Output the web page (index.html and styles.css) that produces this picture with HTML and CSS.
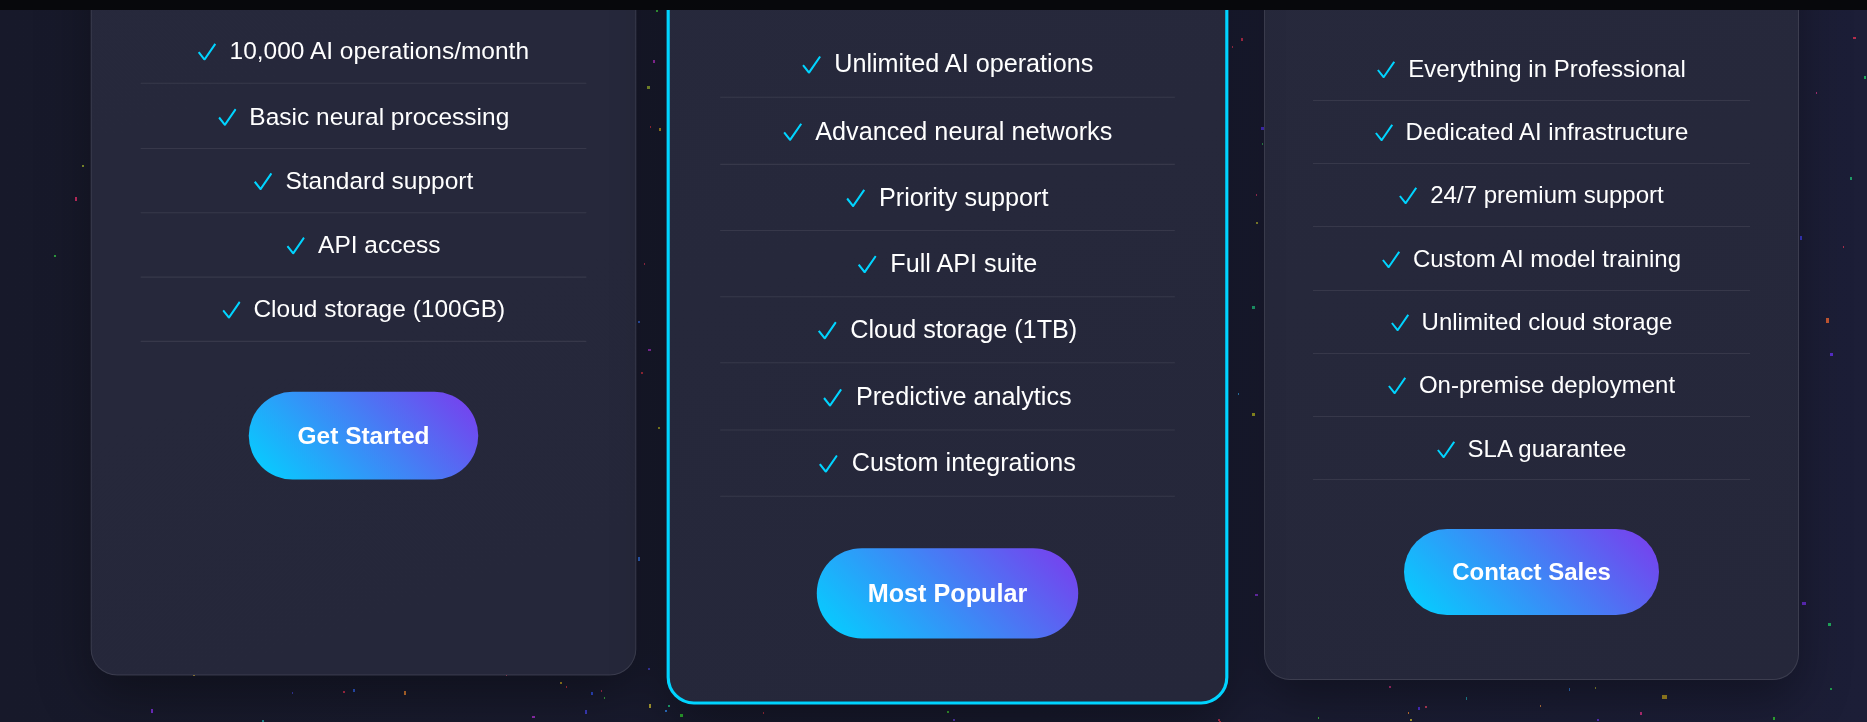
FILE: index.html
```html
<!DOCTYPE html>
<html lang="en">
<head>
<meta charset="utf-8">
<title>Pricing</title>
<link rel="stylesheet" href="styles.css">
</head>
<body>
<div class="topbar"></div>

<div class="particles" aria-hidden="true">
  <span style="left:82px;top:165px;width:2px;height:2px;background:#9aaa30"></span>
  <span style="left:75px;top:197px;width:2px;height:4px;background:#e0306a"></span>
  <span style="left:54px;top:255px;width:2px;height:2px;background:#30b040"></span>
  <span style="left:653px;top:60px;width:2px;height:3px;background:#b030c0"></span>
  <span style="left:647px;top:86px;width:3px;height:3px;background:#9ab030"></span>
  <span style="left:659px;top:128px;width:2px;height:3px;background:#c0a020"></span>
  <span style="left:650px;top:126px;width:1px;height:2px;background:#c03040"></span>
  <span style="left:644px;top:263px;width:1px;height:2px;background:#c03050"></span>
  <span style="left:638px;top:321px;width:2px;height:2px;background:#3060d0"></span>
  <span style="left:648px;top:349px;width:3px;height:2px;background:#a030c0"></span>
  <span style="left:1241px;top:38px;width:2px;height:3px;background:#d03050"></span>
  <span style="left:1232px;top:46px;width:1px;height:2px;background:#c03050"></span>
  <span style="left:1261px;top:127px;width:3px;height:3px;background:#5030e0"></span>
  <span style="left:1262px;top:143px;width:1px;height:2px;background:#30a050"></span>
  <span style="left:1256px;top:194px;width:1px;height:2px;background:#c03060"></span>
  <span style="left:1256px;top:222px;width:2px;height:2px;background:#a0a030"></span>
  <span style="left:1252px;top:306px;width:3px;height:3px;background:#20c080"></span>
  <span style="left:1853px;top:37px;width:3px;height:2px;background:#d03050"></span>
  <span style="left:1864px;top:76px;width:2px;height:3px;background:#20c060"></span>
  <span style="left:1816px;top:92px;width:1px;height:2px;background:#c03080"></span>
  <span style="left:1850px;top:177px;width:2px;height:3px;background:#20b070"></span>
  <span style="left:1800px;top:236px;width:2px;height:4px;background:#4040e0"></span>
  <span style="left:1843px;top:246px;width:1px;height:2px;background:#c03050"></span>
  <span style="left:1826px;top:318px;width:3px;height:5px;background:#e06030"></span>
  <span style="left:1830px;top:353px;width:3px;height:3px;background:#6030e0"></span>
  <span style="left:641px;top:372px;width:2px;height:2px;background:#c03040"></span>
  <span style="left:658px;top:427px;width:2px;height:2px;background:#a0a020"></span>
  <span style="left:638px;top:557px;width:2px;height:4px;background:#3070e0"></span>
  <span style="left:648px;top:668px;width:2px;height:2px;background:#4040c0"></span>
  <span style="left:193px;top:674px;width:2px;height:2px;background:#c0a030"></span>
  <span style="left:506px;top:674px;width:1px;height:2px;background:#c04060"></span>
  <span style="left:292px;top:692px;width:1px;height:2px;background:#4040c0"></span>
  <span style="left:343px;top:691px;width:2px;height:2px;background:#d03050"></span>
  <span style="left:353px;top:689px;width:2px;height:3px;background:#3060e0"></span>
  <span style="left:404px;top:691px;width:2px;height:4px;background:#e08030"></span>
  <span style="left:560px;top:682px;width:2px;height:2px;background:#c0a020"></span>
  <span style="left:566px;top:686px;width:1px;height:2px;background:#d03040"></span>
  <span style="left:591px;top:692px;width:2px;height:3px;background:#3050e0"></span>
  <span style="left:601px;top:690px;width:1px;height:2px;background:#c03050"></span>
  <span style="left:604px;top:697px;width:1px;height:2px;background:#40b040"></span>
  <span style="left:151px;top:709px;width:2px;height:4px;background:#8030e0"></span>
  <span style="left:649px;top:704px;width:2px;height:4px;background:#c0b030"></span>
  <span style="left:668px;top:705px;width:2px;height:2px;background:#20c080"></span>
  <span style="left:680px;top:714px;width:3px;height:3px;background:#30c030"></span>
  <span style="left:665px;top:710px;width:2px;height:2px;background:#3080e0"></span>
  <span style="left:585px;top:710px;width:2px;height:4px;background:#4040d0"></span>
  <span style="left:532px;top:716px;width:3px;height:2px;background:#a030c0"></span>
  <span style="left:262px;top:720px;width:2px;height:2px;background:#20a0a0"></span>
  <span style="left:1238px;top:393px;width:1px;height:2px;background:#3090d0"></span>
  <span style="left:1252px;top:413px;width:3px;height:3px;background:#b0b020"></span>
  <span style="left:1255px;top:594px;width:3px;height:2px;background:#8030d0"></span>
  <span style="left:763px;top:712px;width:1px;height:2px;background:#c03040"></span>
  <span style="left:947px;top:711px;width:2px;height:2px;background:#40c030"></span>
  <span style="left:953px;top:719px;width:2px;height:2px;background:#6040d0"></span>
  <span style="left:1218px;top:719px;width:2px;height:2px;background:#c03050"></span>
  <span style="left:1802px;top:602px;width:4px;height:3px;background:#7030e0"></span>
  <span style="left:1828px;top:623px;width:3px;height:3px;background:#20c060"></span>
  <span style="left:1830px;top:688px;width:2px;height:2px;background:#20b050"></span>
  <span style="left:1389px;top:686px;width:2px;height:2px;background:#d03080"></span>
  <span style="left:1662px;top:695px;width:5px;height:4px;background:#c0a020"></span>
  <span style="left:1569px;top:688px;width:1px;height:3px;background:#3080e0"></span>
  <span style="left:1595px;top:687px;width:1px;height:2px;background:#a0a030"></span>
  <span style="left:1466px;top:697px;width:1px;height:3px;background:#20a0b0"></span>
  <span style="left:1540px;top:705px;width:1px;height:2px;background:#d08040"></span>
  <span style="left:1418px;top:707px;width:2px;height:3px;background:#5030e0"></span>
  <span style="left:1425px;top:706px;width:2px;height:2px;background:#d04060"></span>
  <span style="left:1408px;top:712px;width:1px;height:2px;background:#e08030"></span>
  <span style="left:1640px;top:712px;width:2px;height:3px;background:#d03080"></span>
  <span style="left:1773px;top:717px;width:2px;height:3px;background:#30c030"></span>
  <span style="left:1318px;top:717px;width:1px;height:2px;background:#40c040"></span>
  <span style="left:1410px;top:719px;width:2px;height:2px;background:#c0b030"></span>
  <span style="left:1219px;top:721px;width:2px;height:2px;background:#d03040"></span>
  <span style="left:1597px;top:719px;width:2px;height:2px;background:#6030d0"></span>
  <span style="left:656px;top:10px;width:2px;height:2px;background:#40c040"></span>
</div>

<main class="pricing">
  <article class="card card--lift">
    <div class="card-head"></div>
    <ul class="features">
      <li><svg class="check" viewBox="0 0 18 17"><polyline points="0.9,9 6.6,16.2 17.2,0.8"/></svg>10,000 AI operations/month</li>
      <li><svg class="check" viewBox="0 0 18 17"><polyline points="0.9,9 6.6,16.2 17.2,0.8"/></svg>Basic neural processing</li>
      <li><svg class="check" viewBox="0 0 18 17"><polyline points="0.9,9 6.6,16.2 17.2,0.8"/></svg>Standard support</li>
      <li><svg class="check" viewBox="0 0 18 17"><polyline points="0.9,9 6.6,16.2 17.2,0.8"/></svg>API access</li>
      <li><svg class="check" viewBox="0 0 18 17"><polyline points="0.9,9 6.6,16.2 17.2,0.8"/></svg>Cloud storage (100GB)</li>
    </ul>
    <div class="card-action"><a class="btn" href="#">Get Started</a></div>
  </article>

  <article class="card card--featured">
    <div class="card-head"></div>
    <ul class="features">
      <li><svg class="check" viewBox="0 0 18 17"><polyline points="0.9,9 6.6,16.2 17.2,0.8"/></svg>Unlimited AI operations</li>
      <li><svg class="check" viewBox="0 0 18 17"><polyline points="0.9,9 6.6,16.2 17.2,0.8"/></svg>Advanced neural networks</li>
      <li><svg class="check" viewBox="0 0 18 17"><polyline points="0.9,9 6.6,16.2 17.2,0.8"/></svg>Priority support</li>
      <li><svg class="check" viewBox="0 0 18 17"><polyline points="0.9,9 6.6,16.2 17.2,0.8"/></svg>Full API suite</li>
      <li><svg class="check" viewBox="0 0 18 17"><polyline points="0.9,9 6.6,16.2 17.2,0.8"/></svg>Cloud storage (1TB)</li>
      <li><svg class="check" viewBox="0 0 18 17"><polyline points="0.9,9 6.6,16.2 17.2,0.8"/></svg>Predictive analytics</li>
      <li><svg class="check" viewBox="0 0 18 17"><polyline points="0.9,9 6.6,16.2 17.2,0.8"/></svg>Custom integrations</li>
    </ul>
    <div class="card-action"><a class="btn" href="#">Most Popular</a></div>
  </article>

  <article class="card">
    <div class="card-head"></div>
    <ul class="features">
      <li><svg class="check" viewBox="0 0 18 17"><polyline points="0.9,9 6.6,16.2 17.2,0.8"/></svg>Everything in Professional</li>
      <li><svg class="check" viewBox="0 0 18 17"><polyline points="0.9,9 6.6,16.2 17.2,0.8"/></svg>Dedicated AI infrastructure</li>
      <li><svg class="check" viewBox="0 0 18 17"><polyline points="0.9,9 6.6,16.2 17.2,0.8"/></svg>24/7 premium support</li>
      <li><svg class="check" viewBox="0 0 18 17"><polyline points="0.9,9 6.6,16.2 17.2,0.8"/></svg>Custom AI model training</li>
      <li><svg class="check" viewBox="0 0 18 17"><polyline points="0.9,9 6.6,16.2 17.2,0.8"/></svg>Unlimited cloud storage</li>
      <li><svg class="check" viewBox="0 0 18 17"><polyline points="0.9,9 6.6,16.2 17.2,0.8"/></svg>On-premise deployment</li>
      <li><svg class="check" viewBox="0 0 18 17"><polyline points="0.9,9 6.6,16.2 17.2,0.8"/></svg>SLA guarantee</li>
    </ul>
    <div class="card-action"><a class="btn" href="#">Contact Sales</a></div>
  </article>
</main>
</body>
</html>
```

FILE: styles.css
```css
html, body {
  margin: 0;
  padding: 0;
}

body {
  min-height: 722px;
  overflow: hidden;
  font-family: "Liberation Sans", Arial, sans-serif;
  color: #ffffff;
  background: linear-gradient(90deg, #17192a 0%, #191b2f 55%, #1c1e37 100%);
}

.topbar {
  position: fixed;
  top: 0;
  left: 0;
  right: 0;
  height: 10px;
  background: #07080c;
  z-index: 10;
}

.particles {
  position: fixed;
  inset: 0;
  z-index: 0;
  pointer-events: none;
}

.particles span {
  position: absolute;
  opacity: 0.85;
}

.pricing {
  position: relative;
  z-index: 1;
  display: grid;
  grid-template-columns: repeat(3, 535px);
  column-gap: 49px;
  padding-left: 96px;
  margin-top: -262.5px;
}

.card {
  box-sizing: border-box;
  padding: 48px;
  border: 1px solid rgba(255, 255, 255, 0.1);
  border-radius: 26px;
  background: linear-gradient(160deg, #27293c 0%, #25273a 100%);
  box-shadow: 0 20px 50px rgba(0, 0, 0, 0.35);
}

.card--lift {
  transform: translateY(-15px) scale(1.02);
}

.card--featured {
  border: 3px solid #00d4ff;
  transform: scale(1.05);
}

.card-head {
  height: 251px;
}

.features {
  list-style: none;
  margin: 0;
  padding: 0;
}

.features li {
  padding: 17.35px 0;
  font-size: 24px;
  line-height: 27.6px;
  text-align: center;
  border-bottom: 1px solid rgba(255, 255, 255, 0.08);
}

.check {
  width: 18px;
  height: 17px;
  margin-right: 13px;
  vertical-align: -1px;
  fill: none;
  stroke: #00d4ff;
  stroke-width: 2;
  stroke-linecap: butt;
  stroke-linejoin: miter;
}

.card-action {
  margin-top: 48.7px;
  margin-bottom: 12px;
  text-align: center;
}

.btn {
  display: inline-block;
  padding: 29.2px 48px;
  border-radius: 50px;
  font-size: 24px;
  line-height: 27.6px;
  font-weight: bold;
  color: #ffffff;
  text-decoration: none;
  background: linear-gradient(45deg, #00d4ff 0%, #7c3aed 100%);
}
```
